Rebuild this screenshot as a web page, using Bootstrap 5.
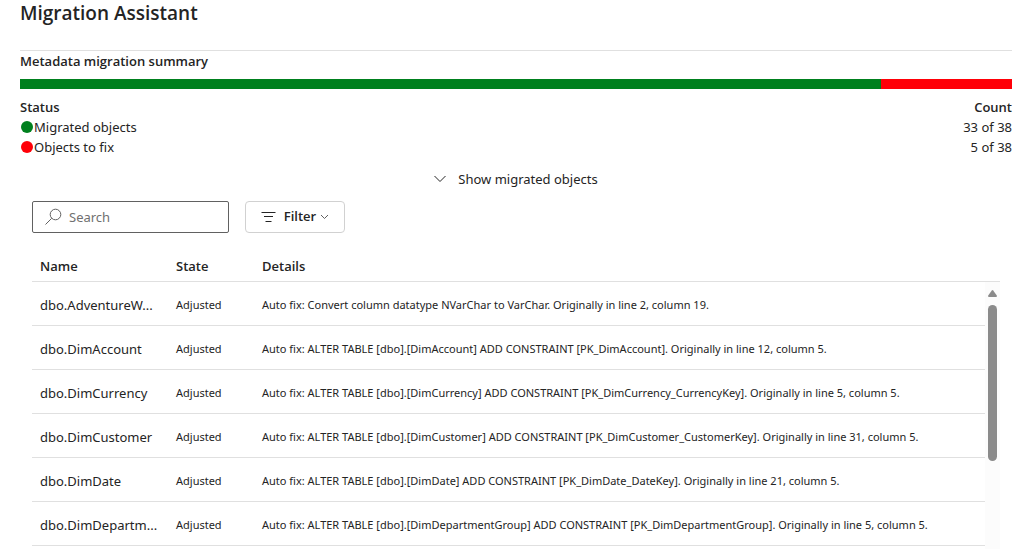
<!DOCTYPE html>
<html lang="en">
<head>
<meta charset="utf-8">
<meta name="viewport" content="width=device-width, initial-scale=1">
<title>Migration Assistant</title>
<link href="https://cdn.jsdelivr.net/npm/bootstrap@5.3.0/dist/css/bootstrap.min.css" rel="stylesheet">
<style>
  body { font-family: "Noto Sans", "Open Sans", sans-serif; font-size: 13px; line-height: 20px; color: #242424; background: #fff; }
  h1, h2, th, .filter-btn { font-family: "Open Sans", "Noto Sans", sans-serif; }
  .page { padding: 0 18px 0 20px; }
  .page-title { font-size: 19px; line-height: 26px; margin-bottom: 24px; }
  .section-title { font-size: 13px; line-height: 20px; border-top: 1px solid #e0e0e0; margin-bottom: 8px; }
  .migration-bar { height: 10px; border-radius: 0; margin-bottom: 8px; }
  .fill-ok { background: #00801e; }
  .fill-fix { background: #ff0008; }
  .status-table th, .status-table td { padding: 0; }
  .dot { width: 12px; height: 12px; margin: 0 1px; }
  .toggle-btn { font-size: 13px; line-height: 20px; gap: 12px; color: #242424; }
  .panel { padding: 0 12px; }
  .search-box { width: 197px; height: 32px; border: 1px solid #616161; border-radius: 2px; padding: 0 12px; gap: 6px; }
  .search-box input { font-size: 13px; min-width: 0; color: #242424; outline: 0; }
  .search-box input::placeholder { color: #707070; opacity: 1; }
  .filter-btn { width: 100px; height: 32px; border: 1px solid #d1d1d1; border-radius: 4px; font-size: 13px; color: #242424; }
  .objects { margin-top: 17px; }
  .objects-table { table-layout: fixed; }
  .objects-table th { height: 31px; padding: 2px 8px 0; font-weight: 600; border-bottom: 1px solid #e0e0e0; }
  .objects-table td { height: 44px; padding: 3px 8px 0; font-size: 11px; border-bottom: 1px solid #e0e0e0; }
  .objects-table td:first-child { font-size: 13px; padding-right: 0; }
  .col-name { width: 136px; }
  .col-state { width: 86px; }
  .scroll-track { width: 15px; top: 32px; bottom: 0; background: #fcfcfc; }
  .scroll-up { margin: 8px 0; }
  .scroll-thumb { width: 9px; height: 156px; border-radius: 5px; background: #8b8b8b; }
</style>
</head>
<body>
<main class="page min-vh-100 d-flex flex-column">
  <h1 class="page-title fw-semibold">Migration Assistant</h1>
  <h2 class="section-title fw-semibold">Metadata migration summary</h2>
  <div class="progress migration-bar">
    <div class="progress-bar fill-ok" style="width: 86.84%"></div>
    <div class="progress-bar fill-fix" style="width: 13.16%"></div>
  </div>
  <table class="status-table w-100">
    <thead><tr><th class="fw-semibold">Status</th><th class="fw-semibold text-end">Count</th></tr></thead>
    <tbody>
      <tr><td><div class="d-flex align-items-center"><span class="dot rounded-circle fill-ok"></span>Migrated objects</div></td><td class="text-end">33 of 38</td></tr>
      <tr><td><div class="d-flex align-items-center"><span class="dot rounded-circle fill-fix"></span>Objects to fix</div></td><td class="text-end">5 of 38</td></tr>
    </tbody>
  </table>
  <div class="d-flex justify-content-center my-2 py-1">
    <button type="button" class="toggle-btn btn border-0 p-0 d-flex align-items-center">
      <svg width="12" height="8" viewBox="0 0 12 8" fill="none" stroke="#242424" aria-hidden="true"><path d="M.5 1 6 6.500 11.500 1"/></svg>
      Show migrated objects
    </button>
  </div>
  <div class="panel flex-grow-1 d-flex flex-column">
    <div class="d-flex gap-3">
      <label class="search-box d-flex align-items-center">
        <svg class="flex-shrink-0" width="18" height="18" viewBox="0 0 18 18" fill="none" stroke="#616161" aria-hidden="true"><circle cx="10.500" cy="6.500" r="5.300"/><path d="M6.700 10.300.5 16.500"/></svg>
        <input type="search" class="border-0 p-0 w-100 bg-transparent" placeholder="Search" aria-label="Search">
      </label>
      <button type="button" class="filter-btn btn p-0 fw-semibold d-flex align-items-center justify-content-center gap-2">
        <svg width="15" height="10" viewBox="0 0 15 10" fill="none" stroke="#242424" aria-hidden="true"><path d="M.5.5h14M3 4.500h9M4.500 9.500h6"/></svg>
        <span class="d-flex align-items-center gap-1">Filter
          <svg width="9" height="6" viewBox="0 0 9 6" fill="none" stroke="#616161" aria-hidden="true"><path d="M1 1l3.500 3.500L8 1"/></svg>
        </span>
      </button>
    </div>
    <div class="objects position-relative flex-grow-1">
      <table class="objects-table w-100">
        <colgroup><col class="col-name"><col class="col-state"><col></colgroup>
        <thead><tr><th scope="col">Name</th><th scope="col">State</th><th scope="col">Details</th></tr></thead>
        <tbody>
          <tr><td>dbo.AdventureW...</td><td>Adjusted</td><td>Auto fix: Convert column datatype NVarChar to VarChar. Originally in line 2, column 19.</td></tr>
          <tr><td>dbo.DimAccount</td><td>Adjusted</td><td>Auto fix: ALTER TABLE [dbo].[DimAccount] ADD CONSTRAINT [PK_DimAccount]. Originally in line 12, column 5.</td></tr>
          <tr><td>dbo.DimCurrency</td><td>Adjusted</td><td>Auto fix: ALTER TABLE [dbo].[DimCurrency] ADD CONSTRAINT [PK_DimCurrency_CurrencyKey]. Originally in line 5, column 5.</td></tr>
          <tr><td>dbo.DimCustomer</td><td>Adjusted</td><td>Auto fix: ALTER TABLE [dbo].[DimCustomer] ADD CONSTRAINT [PK_DimCustomer_CustomerKey]. Originally in line 31, column 5.</td></tr>
          <tr><td>dbo.DimDate</td><td>Adjusted</td><td>Auto fix: ALTER TABLE [dbo].[DimDate] ADD CONSTRAINT [PK_DimDate_DateKey]. Originally in line 21, column 5.</td></tr>
          <tr><td>dbo.DimDepartm...</td><td>Adjusted</td><td>Auto fix: ALTER TABLE [dbo].[DimDepartmentGroup] ADD CONSTRAINT [PK_DimDepartmentGroup]. Originally in line 5, column 5.</td></tr>
        </tbody>
      </table>
      <div class="scroll-track position-absolute end-0 d-flex flex-column align-items-center" aria-hidden="true">
        <svg class="scroll-up flex-shrink-0" width="9" height="7" viewBox="0 0 9 7" fill="#8b8b8b"><path d="M3.800.5q.7-.8 1.400 0L8.800 5.500Q9.300 7 8 7H1Q-.3 7 .2 5.500Z"/></svg>
        <div class="scroll-thumb flex-shrink-0"></div>
      </div>
    </div>
  </div>
</main>
<script src="https://cdn.jsdelivr.net/npm/bootstrap@5.3.0/dist/js/bootstrap.bundle.min.js"></script>
</body>
</html>
